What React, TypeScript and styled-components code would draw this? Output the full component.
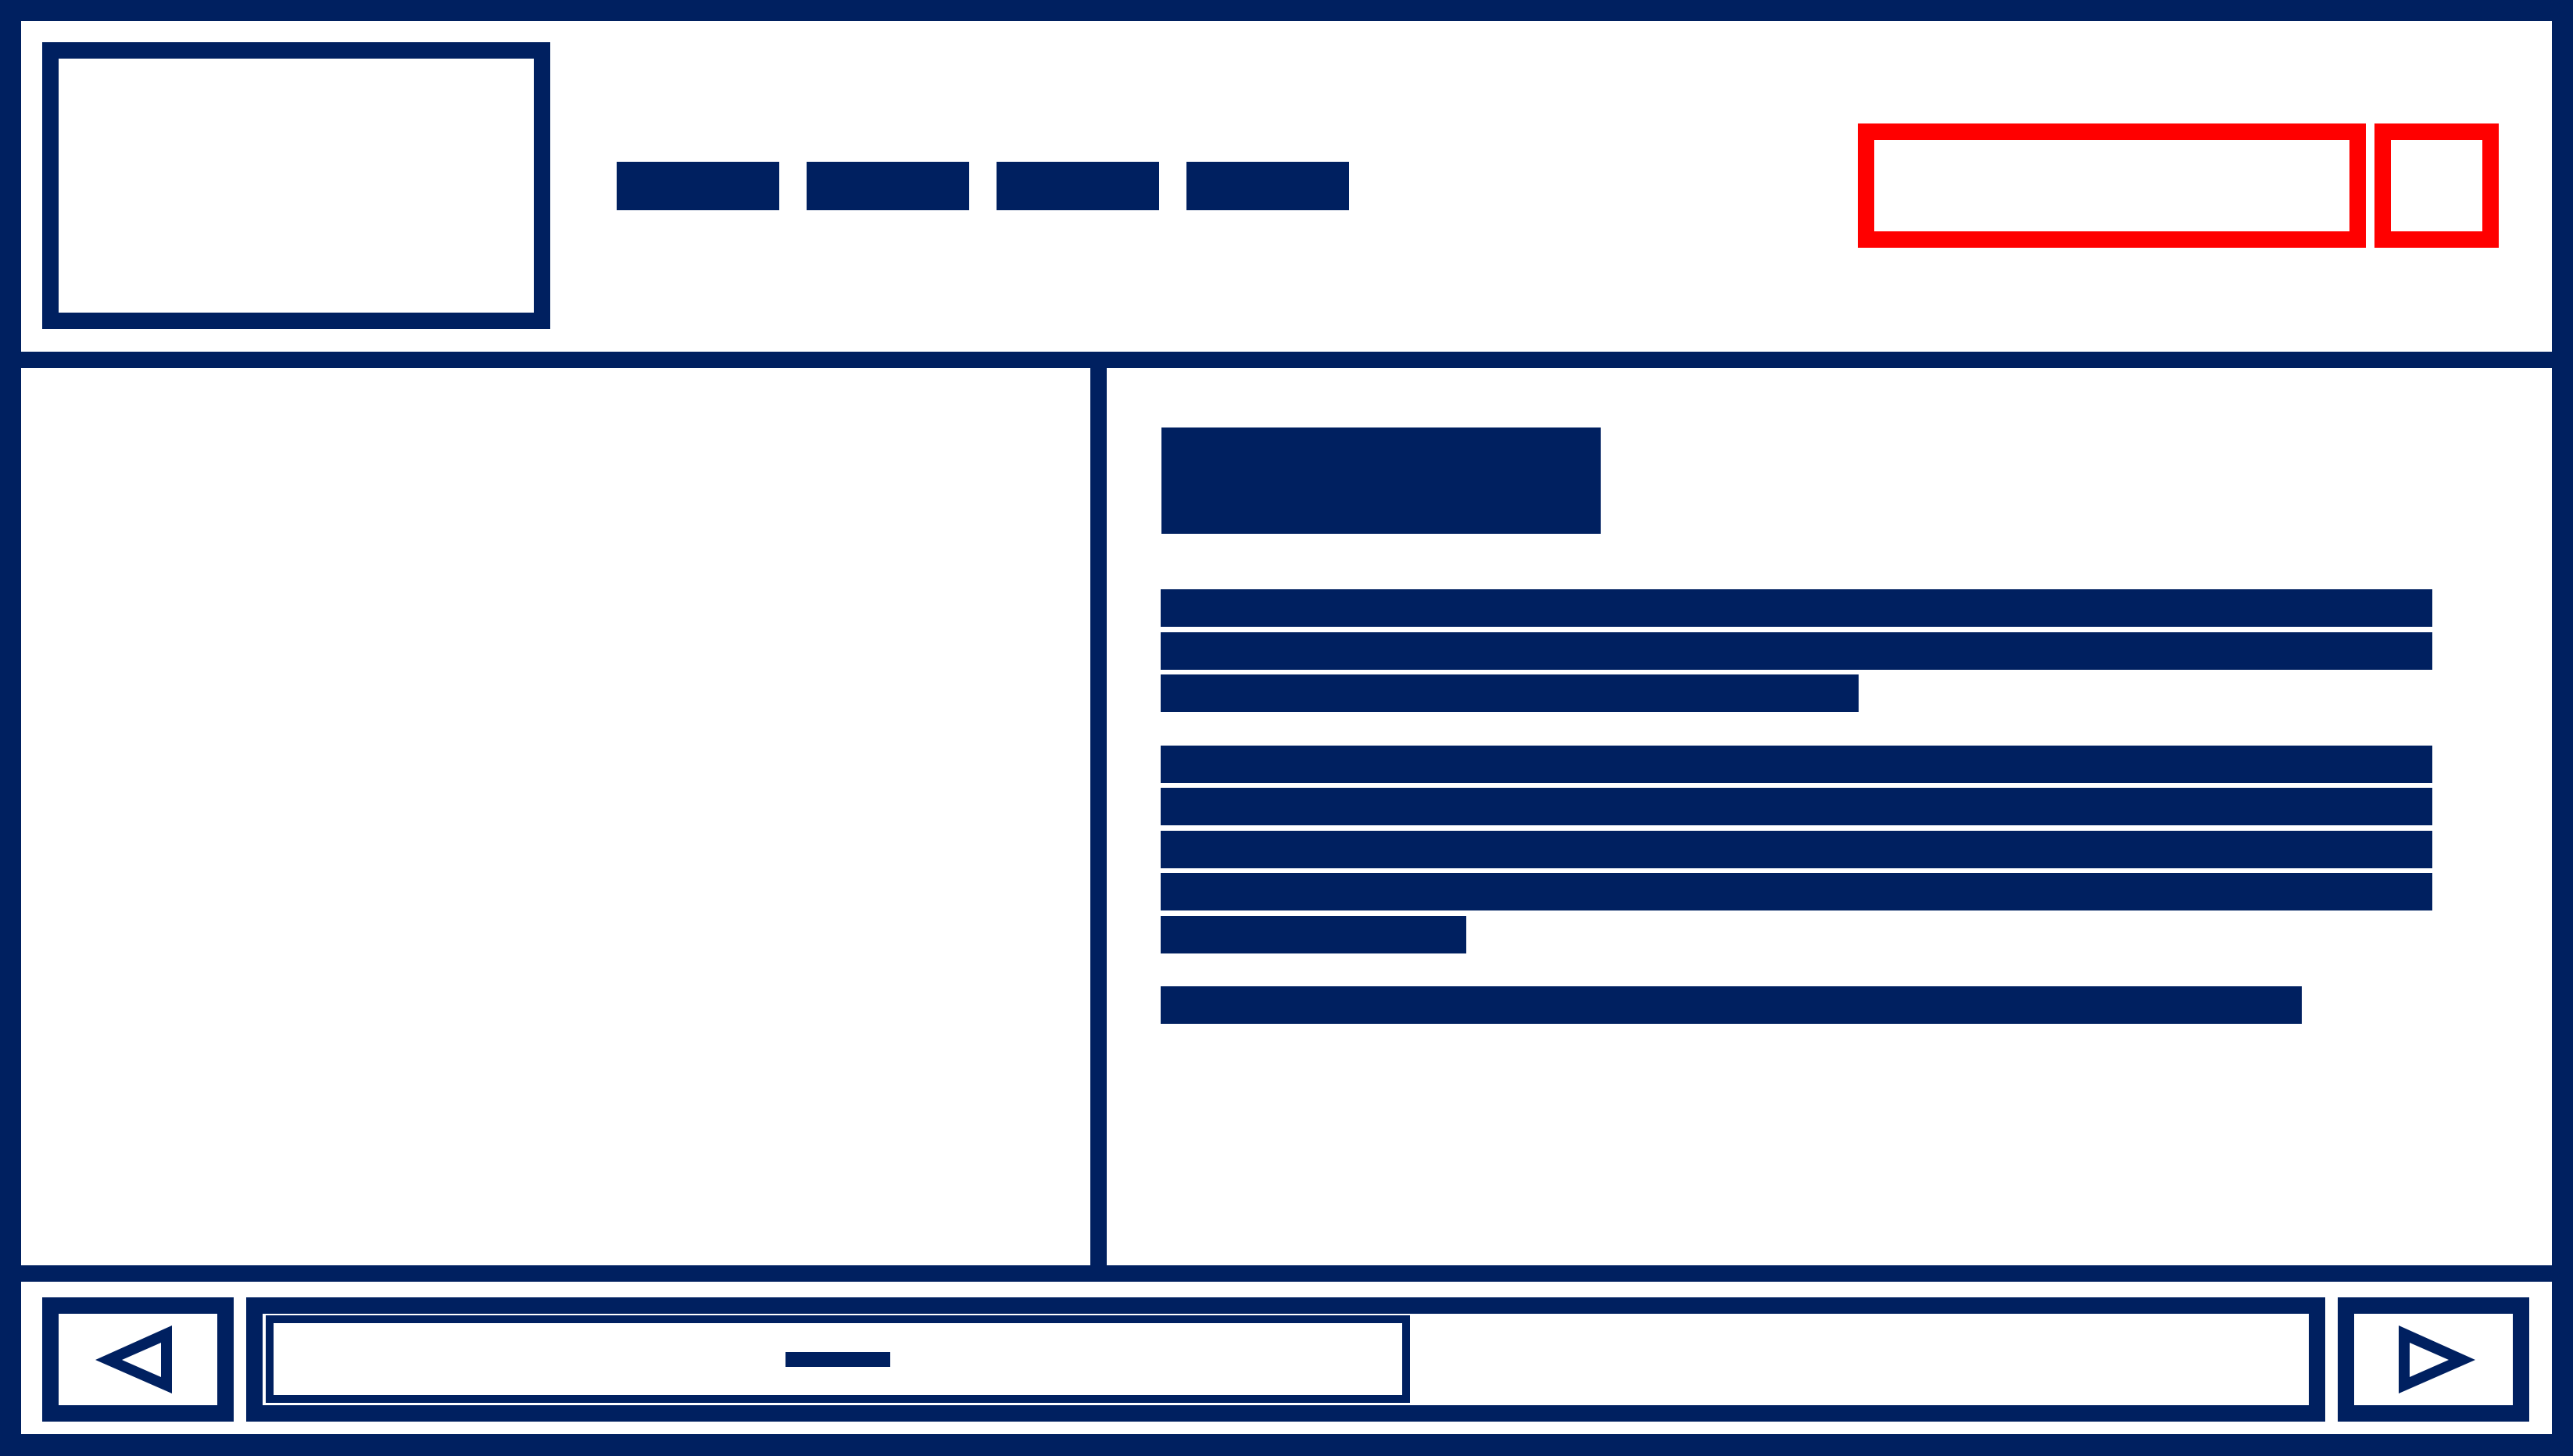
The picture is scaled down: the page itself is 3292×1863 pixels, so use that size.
import React from "react";
import styled, { createGlobalStyle } from "styled-components";

const NAVY = "#002060";
const RED = "#ff0000";

const Global = createGlobalStyle`
  html, body { margin: 0; padding: 0; background: #ffffff; }
  body { font-family: "Liberation Sans", Arial, sans-serif; }
  * { box-sizing: border-box; }
`;

const Frame = styled.div`
  width: 3292px;
  height: 1863px;
  border: 27px solid ${NAVY};
  border-bottom-width: 28px;
  display: flex;
  flex-direction: column;
  background: #fff;
`;

const Header = styled.header`
  height: 444px;
  flex: none;
  border-bottom: 21px solid ${NAVY};
  display: flex;
  align-items: center;
  padding: 0 68px 2px 27px;
`;

const Logo = styled.div`
  width: 650px;
  height: 367px;
  border: 21px solid ${NAVY};
  flex: none;
`;

const Nav = styled.nav`
  display: flex;
  gap: 35px;
  margin-left: 85px;
`;

const NavItem = styled.div`
  width: 208px;
  height: 62px;
  background: ${NAVY};
`;

const Spacer = styled.div`
  flex: 1;
`;

const Actions = styled.div`
  display: flex;
  gap: 11px;
`;

const RedBox = styled.div<{ $w: number }>`
  width: ${(p) => p.$w}px;
  height: 159px;
  border: 21px solid ${RED};
`;

const Main = styled.main`
  flex: 1;
  display: flex;
  min-height: 0;
`;

const Sidebar = styled.aside`
  width: 1389px;
  flex: none;
  border-right: 21px solid ${NAVY};
`;

const Content = styled.section`
  flex: 1;
  padding: 76px 0 0 69px;
  display: flex;
  flex-direction: column;
`;

const Title = styled.div`
  width: 562px;
  height: 136px;
  margin-left: 1px;
  background: ${NAVY};
  margin-bottom: 71px;
`;

const Paragraph = styled.div`
  display: flex;
  flex-direction: column;
  gap: 6.5px;
  margin-bottom: 42.5px;
`;

const Line = styled.div<{ $w: number }>`
  width: ${(p) => p.$w}px;
  height: 48px;
  background: ${NAVY};
`;

const Footer = styled.footer`
  height: 216px;
  flex: none;
  border-top: 21px solid ${NAVY};
  display: flex;
  align-items: flex-start;
  gap: 16px;
  padding: 20px 29px 0 27px;
`;

const NavButton = styled.div<{ $dir: "left" | "right" }>`
  width: 245px;
  height: 159px;
  flex: none;
  border: 21px solid ${NAVY};
  display: flex;
  align-items: center;
  justify-content: center;
  padding: ${(p) => (p.$dir === "left" ? "0 11px 0 0" : "0 0 0 9px")};
`;

const Track = styled.div`
  flex: 1;
  height: 159px;
  border: 21px solid ${NAVY};
  display: flex;
  align-items: flex-start;
  padding: 2px 0 0 4px;
`;

const Thumb = styled.div`
  width: 1464px;
  height: 112px;
  border: 10px solid ${NAVY};
  display: flex;
  align-items: center;
  justify-content: center;
`;

const Grip = styled.div`
  width: 134px;
  height: 19px;
  background: ${NAVY};
`;

const Arrow = ({ dir }: { dir: "left" | "right" }) => {
  const d =
    dir === "left"
      ? "M0 44 L98 0 L98 87 Z M34 44 L84 66 L84 22 Z"
      : "M98 44 L0 0 L0 87 Z M64 44 L14 66 L14 22 Z";
  return (
    <svg width="98" height="87" viewBox="0 0 98 87">
      <path d={d} fill={NAVY} fillRule="evenodd" />
    </svg>
  );
};

export default function App() {
  return (
    <>
      <Global />
      <Frame>
        <Header>
          <Logo />
          <Nav>
            <NavItem />
            <NavItem />
            <NavItem />
            <NavItem />
          </Nav>
          <Spacer />
          <Actions>
            <RedBox $w={650} />
            <RedBox $w={159} />
          </Actions>
        </Header>
        <Main>
          <Sidebar />
          <Content>
            <Title />
            <Paragraph>
              <Line $w={1627} />
              <Line $w={1627} />
              <Line $w={893} />
            </Paragraph>
            <Paragraph>
              <Line $w={1627} />
              <Line $w={1627} />
              <Line $w={1627} />
              <Line $w={1627} />
              <Line $w={391} />
            </Paragraph>
            <Paragraph>
              <Line $w={1460} />
            </Paragraph>
          </Content>
        </Main>
        <Footer>
          <NavButton $dir="left">
            <Arrow dir="left" />
          </NavButton>
          <Track>
            <Thumb>
              <Grip />
            </Thumb>
          </Track>
          <NavButton $dir="right">
            <Arrow dir="right" />
          </NavButton>
        </Footer>
      </Frame>
    </>
  );
}
